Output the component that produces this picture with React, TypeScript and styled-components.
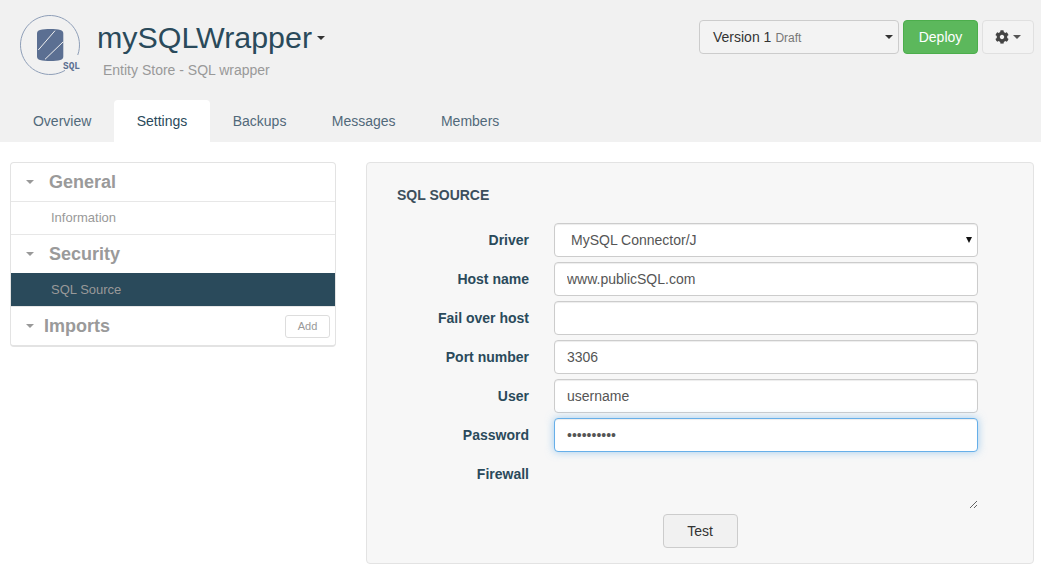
import React from 'react';
import styled, { createGlobalStyle } from 'styled-components';
import { FaCog } from 'react-icons/fa';

const GlobalStyle = createGlobalStyle`
  html, body {
    margin: 0;
    padding: 0;
    background: #ffffff;
    font-family: "Liberation Sans", Arial, sans-serif;
    font-size: 14px;
    color: #333333;
    overflow: hidden;
  }
  * {
    box-sizing: border-box;
  }
`;

const Page = styled.div`
  width: 1041px;
  height: 569px;
  overflow: hidden;
`;

const Header = styled.header`
  height: 142px;
  background: #f1f1f1;
  display: flex;
  flex-direction: column;
`;

const HeaderTop = styled.div`
  height: 100px;
  display: flex;
  justify-content: space-between;
  padding: 0 7px 0 19px;
`;

const Brand = styled.div`
  display: flex;
  align-items: flex-start;
  padding-top: 14px;
`;

const TitleBlock = styled.div`
  margin-left: 12px;
  padding-top: 4px;
`;

const Title = styled.h1`
  margin: 0;
  font-size: 30.4px;
  line-height: 39px;
  font-weight: 400;
  color: #2a4a5b;
  display: flex;
  align-items: center;
`;

const Caret = styled.span<{ $color?: string; $left?: number }>`
  display: inline-block;
  width: 0;
  height: 0;
  margin-left: ${p => p.$left ?? 0}px;
  border-top: 4px solid ${p => p.$color ?? '#333333'};
  border-left: 4px solid transparent;
  border-right: 4px solid transparent;
`;

const Subtitle = styled.div`
  margin: 3px 0 0 6px;
  font-size: 14px;
  line-height: 20px;
  color: #999999;
`;

const Actions = styled.div`
  display: flex;
  align-items: flex-start;
  gap: 4px;
  padding-top: 20px;
`;

const VersionButton = styled.div`
  width: 200px;
  height: 34px;
  padding: 0 5px 0 13px;
  display: flex;
  align-items: center;
  justify-content: space-between;
  background: #f3f3f3;
  border: 1px solid #cccccc;
  border-radius: 4px;
  color: #333333;
`;

const DraftLabel = styled.small`
  font-size: 12px;
  color: #777777;
  margin-left: 4px;
`;

const DeployButton = styled.button`
  width: 75px;
  height: 34px;
  padding: 0;
  background: #5cb85c;
  border: 1px solid #4cae4c;
  border-radius: 4px;
  color: #ffffff;
  font: inherit;
`;

const GearButton = styled.button`
  width: 52px;
  height: 34px;
  padding: 0;
  display: flex;
  align-items: center;
  justify-content: center;
  gap: 4px;
  background: #f3f3f3;
  border: 1px solid #e0e0e0;
  border-radius: 4px;
  color: #444444;
`;

const Tabs = styled.nav`
  height: 42px;
  padding-left: 10.3px;
  display: flex;
`;

const Tab = styled.div<{ $active?: boolean }>`
  padding: 0 22.7px;
  line-height: 42px;
  border-radius: 4px 4px 0 0;
  color: ${p => (p.$active ? '#2a4a5b' : '#51697a')};
  background: ${p => (p.$active ? '#ffffff' : 'transparent')};
`;

const Content = styled.main`
  display: flex;
  align-items: flex-start;
  gap: 30px;
  padding: 20px 7px 0 10px;
`;

const Sidebar = styled.aside`
  width: 326px;
  background: #ffffff;
  border: 1px solid #e3e3e3;
  border-bottom-width: 2px;
  border-radius: 4px;
  overflow: hidden;
`;

const SideHeading = styled.div<{ $gap?: number }>`
  height: 38px;
  padding: 0 5px 0 15px;
  display: flex;
  align-items: center;
  font-size: 18px;
  font-weight: 700;
  color: #9a9a9a;

  & > span:nth-child(2) {
    margin-left: ${p => p.$gap ?? 15}px;
  }
`;

const SideItem = styled.div<{ $active?: boolean }>`
  height: 34px;
  line-height: 31px;
  padding-left: 40px;
  font-size: 13px;
  color: #999999;
  border-top: 1px solid ${p => (p.$active ? '#2a4a5b' : '#e7e7e7')};
  border-bottom: 1px solid #e7e7e7;
  background: ${p => (p.$active ? '#2a4a5b' : '#ffffff')};
  background-clip: padding-box;
`;

const AddButton = styled.button`
  margin-left: auto;
  width: 45px;
  height: 23px;
  padding: 0;
  background: #ffffff;
  border: 1px solid #dddddd;
  border-radius: 3px;
  color: #999999;
  font: 11px "Liberation Sans", Arial, sans-serif;
`;

const Panel = styled.section`
  width: 668px;
  height: 402px;
  padding: 24px 30px 0;
  background: #f7f7f7;
  border: 1px solid #e3e3e3;
  border-radius: 4px;
`;

const PanelTitle = styled.h2`
  margin: 0 0 19px;
  font-size: 14px;
  line-height: 17px;
  font-weight: 700;
  color: #3c4f5c;
`;

const Row = styled.div`
  display: flex;
  align-items: flex-start;
  margin-bottom: 5px;
`;

const Label = styled.label`
  width: 132px;
  margin-right: 25px;
  flex: none;
  font-weight: 700;
  line-height: 34px;
  text-align: right;
  color: #2a4a5b;
`;

const Input = styled.input<{ $focused?: boolean }>`
  width: 424px;
  height: 34px;
  padding: 6px 12px;
  background: #ffffff;
  border: 1px solid ${p => (p.$focused ? '#66afe9' : '#cccccc')};
  border-radius: 4px;
  box-shadow: ${p =>
    p.$focused
      ? 'inset 0 1px 1px rgba(0,0,0,.075), 0 0 8px rgba(102,175,233,.6)'
      : 'inset 0 1px 1px rgba(0,0,0,.075)'};
  color: #555555;
  font: 14px "Liberation Sans", Arial, sans-serif;
  outline: none;
`;

const SelectWrap = styled.div`
  position: relative;
  width: 424px;
  height: 34px;

  &::after {
    content: '';
    position: absolute;
    top: 14px;
    right: 6.5px;
    border-top: 6px solid #111111;
    border-left: 3.5px solid transparent;
    border-right: 3.5px solid transparent;
    pointer-events: none;
  }
`;

const Select = styled.select`
  appearance: none;
  display: block;
  width: 100%;
  height: 34px;
  padding: 6px 12px 6px 16px;
  background: #ffffff;
  border: 1px solid #cccccc;
  border-radius: 4px;
  box-shadow: inset 0 1px 1px rgba(0,0,0,.075);
  color: #555555;
  font: 14px "Liberation Sans", Arial, sans-serif;
`;

const TextArea = styled.textarea`
  display: block;
  width: 424px;
  height: 52px;
  padding: 6px 12px;
  background: transparent;
  border: none;
  outline: none;
  resize: vertical;
  font: 14px "Liberation Sans", Arial, sans-serif;
`;

const TestRow = styled.div`
  display: flex;
  justify-content: center;
`;

const TestButton = styled.button`
  width: 75px;
  height: 34px;
  padding: 0;
  background: #f1f1f1;
  border: 1px solid #cccccc;
  border-radius: 4px;
  color: #333333;
  font: 14px "Liberation Sans", Arial, sans-serif;
`;

const Logo = () => (
  <svg width="66" height="62" viewBox="0 0 66 62">
    <path d="M58.750 41A29.500 29.500 0 1 0 46 56.400" fill="none" stroke="#8f9fb8" strokeWidth="1" />
    <path
      d="M18 19.500c0-2 1-3 3-3.500 5.500-1.300 15.500-1.300 20.300 0 2 .5 3 1.500 3 3.500v23c0 2-1 3-3 3.500-4.800 1.300-14.800 1.300-20.300 0-2-.5-3-1.500-3-3.500z"
      fill="#5b6f92"
    />
    <path d="M19.300 36 36 16.700M26 45.300 44.300 27.700" stroke="#f1f1f1" strokeWidth="1" fill="none" />
    <text
      x="44"
      y="55"
      fontFamily="'Liberation Mono', monospace"
      fontSize="11"
      fontWeight="700"
      fill="#5b6f92"
      textLength="17"
      lengthAdjust="spacingAndGlyphs"
    >
      SQL
    </text>
  </svg>
);

export default function App() {
  return (
    <Page>
      <GlobalStyle />
      <Header>
        <HeaderTop>
          <Brand>
            <Logo />
            <TitleBlock>
              <Title>
                mySQLWrapper
                <Caret $left={5} />
              </Title>
              <Subtitle>Entity Store - SQL wrapper</Subtitle>
            </TitleBlock>
          </Brand>
          <Actions>
            <VersionButton>
              <span>
                Version 1<DraftLabel>Draft</DraftLabel>
              </span>
              <Caret />
            </VersionButton>
            <DeployButton>Deploy</DeployButton>
            <GearButton>
              <FaCog size={14} />
              <Caret $color="#555555" />
            </GearButton>
          </Actions>
        </HeaderTop>
        <Tabs>
          <Tab>Overview</Tab>
          <Tab $active>Settings</Tab>
          <Tab>Backups</Tab>
          <Tab>Messages</Tab>
          <Tab>Members</Tab>
        </Tabs>
      </Header>
      <Content>
        <Sidebar>
          <SideHeading>
            <Caret $color="#999999" />
            <span>General</span>
          </SideHeading>
          <SideItem>Information</SideItem>
          <SideHeading>
            <Caret $color="#999999" />
            <span>Security</span>
          </SideHeading>
          <SideItem $active>SQL Source</SideItem>
          <SideHeading $gap={10}>
            <Caret $color="#999999" />
            <span>Imports</span>
            <AddButton>Add</AddButton>
          </SideHeading>
        </Sidebar>
        <Panel>
          <PanelTitle>SQL SOURCE</PanelTitle>
          <Row>
            <Label>Driver</Label>
            <SelectWrap>
              <Select defaultValue="mysql">
                <option value="mysql">MySQL Connector/J</option>
              </Select>
            </SelectWrap>
          </Row>
          <Row>
            <Label>Host name</Label>
            <Input defaultValue="www.publicSQL.com" />
          </Row>
          <Row>
            <Label>Fail over host</Label>
            <Input />
          </Row>
          <Row>
            <Label>Port number</Label>
            <Input defaultValue="3306" />
          </Row>
          <Row>
            <Label>User</Label>
            <Input defaultValue="username" />
          </Row>
          <Row>
            <Label>Password</Label>
            <Input $focused type="password" defaultValue="••••••••••" />
          </Row>
          <Row>
            <Label>Firewall</Label>
            <TextArea />
          </Row>
          <TestRow>
            <TestButton>Test</TestButton>
          </TestRow>
        </Panel>
      </Content>
    </Page>
  );
}
